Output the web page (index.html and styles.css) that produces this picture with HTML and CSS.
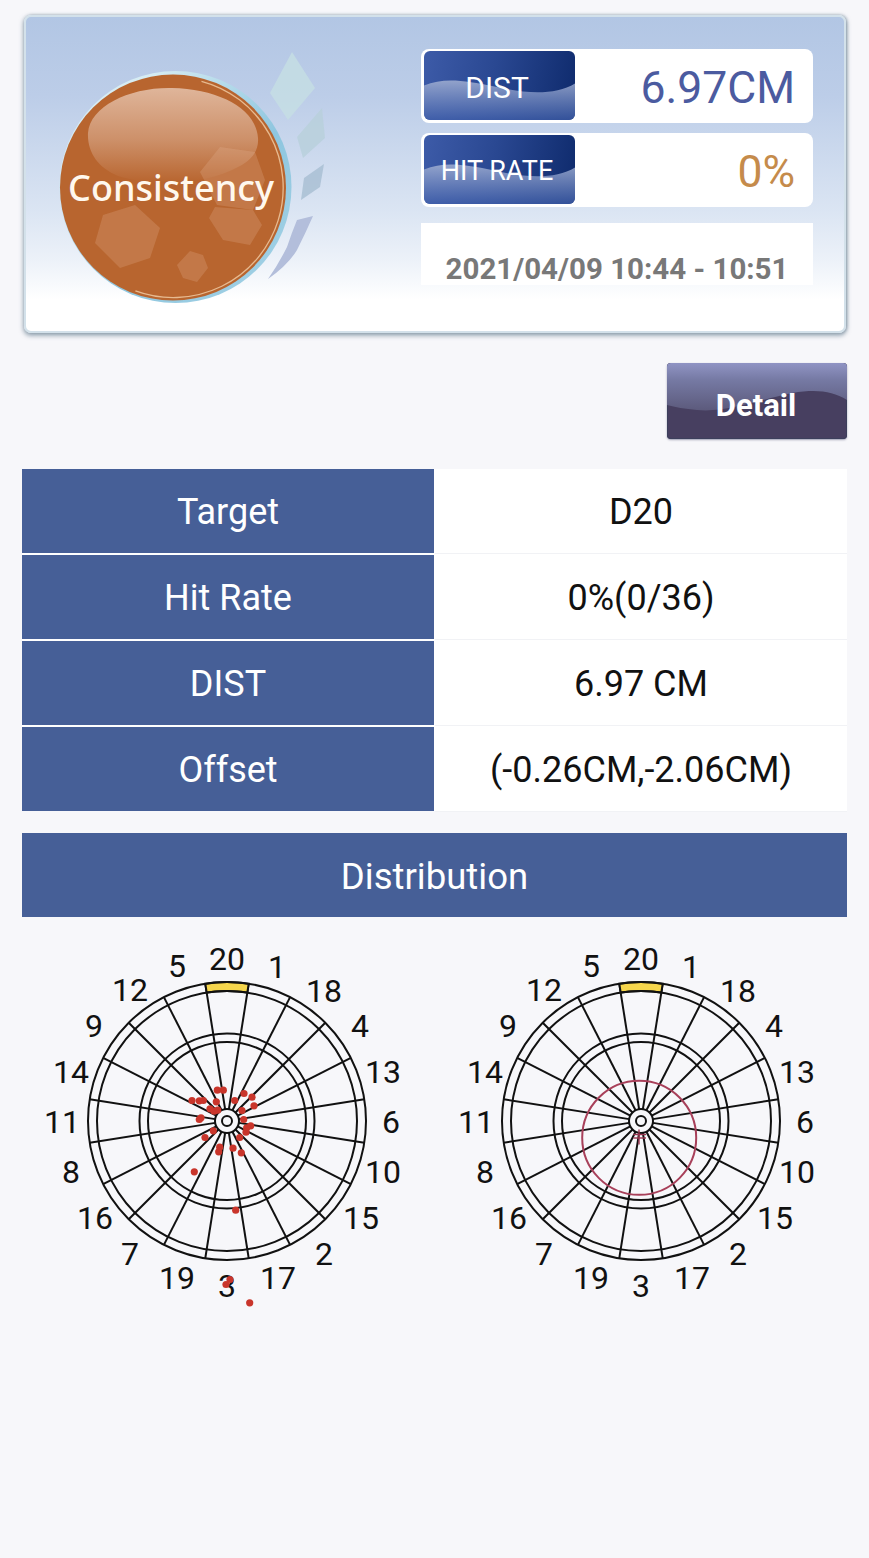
FILE: index.html
```html
<!DOCTYPE html>
<html lang="en">
<head>
<meta charset="utf-8">
<title>Consistency</title>
<link rel="stylesheet" href="styles.css">
</head>
<body>
<main class="page">
  <section class="card">
    <svg class="logo" viewBox="50 45 285 265" width="285" height="265">
      <defs>
        <linearGradient id="gloss" x1="0" y1="0" x2="0" y2="1">
          <stop offset="0" stop-color="#dfb59a"/>
          <stop offset="0.55" stop-color="#cd9069"/>
          <stop offset="1" stop-color="#b8652f"/>
        </linearGradient>
        <linearGradient id="halo" x1="0" y1="0" x2="1" y2="1">
          <stop offset="0.2" stop-color="#d6ecf3"/>
          <stop offset="0.6" stop-color="#8ec6df"/>
          <stop offset="1" stop-color="#a6d3e6"/>
        </linearGradient>
      </defs>
      <polygon class="leaf1" points="292,52 315,88 288,120 270,93"/>
      <polygon class="leaf2" points="322,108 325,138 303,158 297,137"/>
      <polygon class="leaf3" points="324,164 320,187 301,200 304,178"/>
      <path class="leaf4" d="M313,216 L297,220 Q292,232 287,247 Q278,265 268,279 Q288,265 297,250 Q306,232 313,216Z"/>
      <circle cx="175.5" cy="187" r="116" fill="url(#halo)"/>
      <circle cx="173" cy="187.5" r="113" class="ball"/>
      <path class="gloss" d="M88,133 C90,106 130,87 172,88 C218,89 256,108 258,138 C259,150 252,160 240,166 C205,186 150,186 118,176 C98,168 87,152 88,133Z"/>
      <path class="ring" d="M201.5,81.3 A110,110 0 1 1 135.4,290.9"/>
      <polygon class="hex" points="135,205 160,228 150,258 120,268 95,243 103,215"/>
      <polygon class="hex" points="220,147 255,152 265,180 253,210 217,205 200,172"/>
      <polygon class="hex" points="215,207 253,210 262,225 250,245 223,240 209,218"/>
      <polygon class="hex" points="190,251 203,255 208,268 197,282 183,278 177,265"/>
      <text class="logo-text" x="171" y="201" text-anchor="middle">Consistency</text>
    </svg>
    <div class="stats">
      <div class="pill">
        <div class="badge">
          <svg class="wave" viewBox="0 0 150 68" preserveAspectRatio="none"><defs><linearGradient id="waveFill" x1="0" y1="0" x2="0" y2="1"><stop offset="0" stop-color="#a3b1d3" stop-opacity="0.85"/><stop offset="1" stop-color="#4261ac" stop-opacity="0.7"/></linearGradient></defs><path d="M0,34 C20,26 40,29 70,35 C100,42 130,44 150,32 L150,68 L0,68Z" fill="url(#waveFill)"/></svg>
          <span class="badge-text badge-dist">DIST</span>
        </div>
        <div class="value value-dist">6.97CM</div>
      </div>
      <div class="pill">
        <div class="badge">
          <svg class="wave" viewBox="0 0 150 68" preserveAspectRatio="none"><path d="M0,34 C20,26 40,29 70,35 C100,42 130,44 150,32 L150,68 L0,68Z" fill="url(#waveFill)"/></svg>
          <span class="badge-text badge-hit">HIT RATE</span>
        </div>
        <div class="value value-hit">0%</div>
      </div>
      <div class="date">2021/04/09 10:44 - 10:51</div>
    </div>
  </section>

  <div class="actions">
    <button class="detail" type="button">
      <svg class="wave" viewBox="0 0 180 76" preserveAspectRatio="none"><defs><linearGradient id="detailFill" x1="0" y1="0" x2="0" y2="1"><stop offset="0" stop-color="#9094c4"/><stop offset="0.35" stop-color="#767aa4"/><stop offset="1" stop-color="#5c5a7c"/></linearGradient></defs><path d="M0,0 L180,0 L180,37 C165,28 150,26 125,30 C95,36 60,50 30,47 C18,46 8,44 0,42Z" fill="url(#detailFill)"/></svg>
      <span class="detail-text">Detail</span>
    </button>
  </div>

  <section class="table">
    <div class="th">Target</div><div class="td">D20</div>
    <div class="th">Hit Rate</div><div class="td">0%(0/36)</div>
    <div class="th">DIST</div><div class="td">6.97 CM</div>
    <div class="th">Offset</div><div class="td">(-0.26CM,-2.06CM)</div>
  </section>

  <h2 class="dist-head">Distribution</h2>

  <section class="boards">
    <svg class="board" viewBox="-207 -182 414 390" width="414" height="390">
      <defs>
        <g id="spokes" class="spoke">
          <line y1="-12" y2="-139" transform="rotate(9)"/><line y1="-12" y2="-139" transform="rotate(27)"/>
          <line y1="-12" y2="-139" transform="rotate(45)"/><line y1="-12" y2="-139" transform="rotate(63)"/>
          <line y1="-12" y2="-139" transform="rotate(81)"/><line y1="-12" y2="-139" transform="rotate(99)"/>
          <line y1="-12" y2="-139" transform="rotate(117)"/><line y1="-12" y2="-139" transform="rotate(135)"/>
          <line y1="-12" y2="-139" transform="rotate(153)"/><line y1="-12" y2="-139" transform="rotate(171)"/>
          <line y1="-12" y2="-139" transform="rotate(189)"/><line y1="-12" y2="-139" transform="rotate(207)"/>
          <line y1="-12" y2="-139" transform="rotate(225)"/><line y1="-12" y2="-139" transform="rotate(243)"/>
          <line y1="-12" y2="-139" transform="rotate(261)"/><line y1="-12" y2="-139" transform="rotate(279)"/>
          <line y1="-12" y2="-139" transform="rotate(297)"/><line y1="-12" y2="-139" transform="rotate(315)"/>
          <line y1="-12" y2="-139" transform="rotate(333)"/><line y1="-12" y2="-139" transform="rotate(351)"/>
        </g>
        <g id="rings" class="spoke">
          <path class="d20" d="M-21.7,-137.3 A139,139 0 0 1 21.7,-137.3 L20.3,-128.4 A130,130 0 0 0 -20.3,-128.4Z"/>
          <circle r="139"/><circle r="130"/><circle r="87.5"/><circle r="79"/><circle r="12"/><circle r="5"/>
        </g>
      </defs>
      <use href="#spokes"/><use href="#rings"/>
      <g class="nums" transform="translate(0 1)">
        <text y="-163">20</text><text x="50" y="-155">1</text><text x="97" y="-131">18</text><text x="133" y="-96">4</text><text x="156" y="-50">13</text><text x="164">6</text><text x="156" y="50">10</text><text x="134" y="96">15</text><text x="97" y="132">2</text><text x="51" y="156">17</text><text y="164">3</text><text x="-50" y="156">19</text><text x="-97" y="132">7</text><text x="-132" y="96">16</text><text x="-156" y="50">8</text><text x="-165">11</text><text x="-156" y="-50">14</text><text x="-133" y="-96">9</text><text x="-97" y="-132">12</text><text x="-50" y="-156">5</text>
      </g>
      <g class="hits">
        <circle cx="-9.7" cy="-30.8" r="3.6"/><circle cx="-3.7" cy="-30.8" r="3.6"/><circle cx="17" cy="-27.5" r="3.6"/><circle cx="25" cy="-23.8" r="3.6"/><circle cx="27" cy="-15.2" r="3.6"/><circle cx="-35" cy="-20.5" r="3.6"/><circle cx="-27.7" cy="-20.2" r="3.6"/><circle cx="-23.7" cy="-20.5" r="3.6"/><circle cx="-10.7" cy="-19.2" r="3.6"/><circle cx="7.7" cy="-20.5" r="3.6"/><circle cx="15" cy="-10.5" r="3.6"/><circle cx="-17" cy="-12.2" r="3.6"/><circle cx="-13" cy="-9.8" r="3.6"/><circle cx="-9.3" cy="-10.8" r="3.6"/><circle cx="-26" cy="-3.2" r="3.6"/><circle cx="-27.7" cy="-1.5" r="3.6"/><circle cx="16.7" cy="-1.5" r="3.6"/><circle cx="23.7" cy="4.8" r="3.6"/><circle cx="19.7" cy="6.8" r="3.6"/><circle cx="19" cy="11.2" r="3.6"/><circle cx="12.7" cy="16.5" r="3.6"/><circle cx="-13.7" cy="9.8" r="3.6"/><circle cx="-22" cy="16.5" r="3.6"/><circle cx="-7.3" cy="26.2" r="3.6"/><circle cx="-8.3" cy="30.8" r="3.6"/><circle cx="6" cy="27.2" r="3.6"/><circle cx="14.3" cy="31.8" r="3.6"/><circle cx="-32.7" cy="50.8" r="3.6"/><circle cx="8.7" cy="89.2" r="3.6"/><circle cx="3" cy="158.5" r="3.6"/><circle cx="-1" cy="163.5" r="3.6"/><circle cx="22.7" cy="181.8" r="3.6"/>
      </g>
    </svg>
    <svg class="board" viewBox="-207 -182 414 390" width="414" height="390">
      <use href="#spokes"/><use href="#rings"/>
      <g class="nums" transform="translate(0 1)">
        <text y="-163">20</text><text x="50" y="-155">1</text><text x="97" y="-131">18</text><text x="133" y="-96">4</text><text x="156" y="-50">13</text><text x="164">6</text><text x="156" y="50">10</text><text x="134" y="96">15</text><text x="97" y="132">2</text><text x="51" y="156">17</text><text y="164">3</text><text x="-50" y="156">19</text><text x="-97" y="132">7</text><text x="-132" y="96">16</text><text x="-156" y="50">8</text><text x="-165">11</text><text x="-156" y="-50">14</text><text x="-133" y="-96">9</text><text x="-97" y="-132">12</text><text x="-50" y="-156">5</text>
      </g>
      <g class="spread">
        <circle cx="-1.8" cy="16.8" r="57"/>
        <line class="cross" x1="-2" y1="8.5" x2="-2" y2="23.5"/>
        <line class="cross" x1="-7.7" y1="13.5" x2="5" y2="13.5"/>
        <line class="cross" x1="-7.7" y1="17" x2="5" y2="17"/>
      </g>
    </svg>
  </section>
</main>
</body>
</html>
```

FILE: styles.css
```css
* { box-sizing: border-box; }
html, body { margin: 0; padding: 0; }
body {
  width: 869px;
  height: 1558px;
  overflow: hidden;
  background: #f7f7fa;
  font-family: Roboto, "Liberation Sans", sans-serif;
  color: #111;
}
.page { padding: 15px 22px 0; display: flex; flex-direction: column; }

.card {
  height: 318px;
  margin: 0 1px 0 2px;
  padding: 34px 31px 0 24px;
  display: flex;
  justify-content: space-between;
  align-items: flex-start;
  background: linear-gradient(#b2c6e4 0, #bccde8 25%, #dbe5f3 62%, #edf2f9 78%, #fff 90%);
  border: 2px solid #d3e1ea;
  border-radius: 7px;
  box-shadow: 0 2px 4px 1px rgba(90, 115, 135, .55), 1px 0 3px rgba(90, 115, 135, .45);
}
.logo { display: block; margin-top: -6px; flex: none; }
.leaf1 { fill: #c6dfe3; opacity: .8; }
.leaf2 { fill: #b8d0dc; opacity: .85; }
.leaf3 { fill: #a9bfd3; opacity: .85; }
.leaf4 { fill: #b3bedb; }
.ball { fill: #b8652f; }
.gloss { fill: url(#gloss); }
.ring { fill: none; stroke: #f3cfa9; stroke-width: 1.3; opacity: .8; }
.hex { fill: #e5b79a; opacity: .24; }
.logo-text {
  font-family: "Noto Sans", sans-serif;
  font-size: 36px;
  font-weight: 500;
  fill: #fff8ee;
}

.stats { width: 392px; display: flex; flex-direction: column; gap: 10px; flex: none; margin-top: -2px; }
.pill {
  height: 74px;
  padding: 2px 18px 3px 3px;
  display: flex;
  align-items: stretch;
  background: #fff;
  border-radius: 8px;
}
.badge {
  position: relative;
  width: 151px;
  padding: 3px 5px 0 0;
  display: flex;
  align-items: center;
  justify-content: center;
  color: #fff;
  border-radius: 6px;
  overflow: hidden;
  background: linear-gradient(100deg, #3d5ba8 0, #2a4892 45%, #0e2a6c 100%);
}
.wave { position: absolute; inset: 0; width: 100%; height: 100%; display: block; }
.badge-text { position: relative; }
.badge-dist { font-size: 30px; }
.badge-hit { font-size: 27px; }
.value { flex: 1; text-align: right; font-size: 44.5px; line-height: 75px; }
.value-dist { color: #4b5ba0; }
.value-hit { color: #c58b4b; }
.date {
  margin-top: 6px;
  height: 62px;
  padding-top: 25px;
  text-align: center;
  font-size: 29.5px;
  line-height: 42px;
  font-weight: 700;
  color: #787878;
  background: #fff;
}

.actions { display: flex; justify-content: flex-end; margin-top: 30px; }
.detail {
  position: relative;
  width: 180px;
  height: 76px;
  padding: 8px 2px 0 0;
  border: 0;
  border-radius: 4px;
  overflow: hidden;
  background: #473f60;
  box-shadow: inset 0 0 0 1px #3c3f5c, 0 1px 2px rgba(70, 70, 110, .5);
  color: #fff;
  font-family: inherit;
  font-size: 31px;
  font-weight: 700;
}
.detail-text { position: relative; }

.table {
  margin-top: 30px;
  display: grid;
  grid-template-columns: 412px 412px;
  grid-auto-rows: 84px;
  gap: 2px 1px;
  background: #fff;
}
.th, .td { display: flex; align-items: center; justify-content: center; font-size: 36px; padding-top: 2px; }
.th { background: #465f97; color: #fff; }
.td { background: #fff; color: #111; box-shadow: 0 1px 0 #f1f2f5; }

.dist-head {
  margin: 22px 0 0;
  height: 84px;
  padding-top: 2px;
  display: flex;
  align-items: center;
  justify-content: center;
  background: #465f97;
  color: #fff;
  font-size: 36.5px;
  font-weight: 400;
}

.boards { display: flex; margin: 22px 0 0 -2px; }
.board { display: block; flex: none; overflow: visible; }
.spoke { fill: none; stroke: #111; stroke-width: 2; }
.d20 { fill: #f6d64c; }
.nums text {
  font-size: 32px;
  fill: #111;
  text-anchor: middle;
  dominant-baseline: central;
}
.hits { fill: #c9352b; }
.spread { fill: none; stroke: #a8405a; stroke-width: 2; }
.spread .cross { stroke-width: 1.4; stroke: #9a3550; }
```
